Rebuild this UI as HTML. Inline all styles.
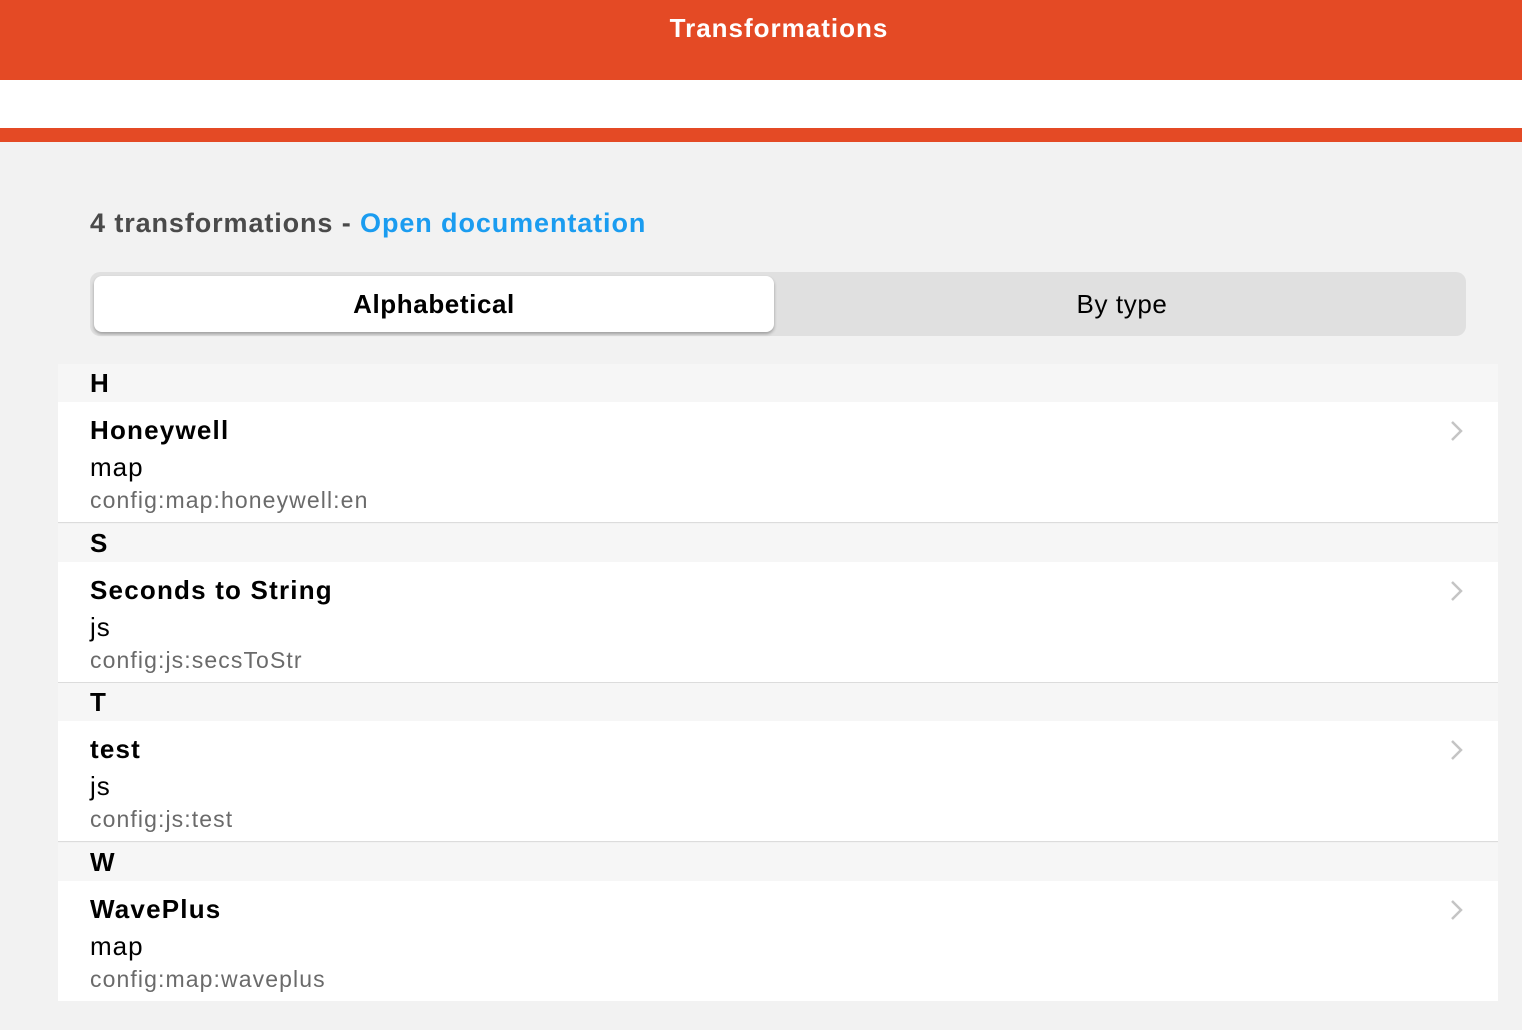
<!DOCTYPE html>
<html><head><meta charset="utf-8"><style>
*{margin:0;padding:0;box-sizing:border-box}
body{width:1522px;height:1030px;background:#f2f2f2;font-family:"Liberation Sans",sans-serif;position:relative;overflow:hidden}
.a{position:absolute;white-space:nowrap}
.hdr{left:0;top:0;width:1522px;height:80px;background:#e44a25}
.wh{left:0;top:80px;width:1522px;height:48px;background:#fff}
.or{left:0;top:128px;width:1522px;height:14px;background:#e44a25}
.title{left:0;width:1522px;top:12px;text-align:center;color:#fff;font-weight:bold;font-size:26px;line-height:32px;padding-left:36px;letter-spacing:1px}
.count{left:90px;top:206px;font-size:27px;line-height:34px;color:#4a4a4a;font-weight:bold;letter-spacing:0.9px}
.count span{color:#1a9cf0}
.seg{left:90px;top:272px;width:1376px;height:64px;background:#e0e0e0;border-radius:10px}
.sel{left:94px;top:276px;width:680px;height:56px;background:#fff;border-radius:8px;box-shadow:0 2px 3px rgba(0,0,0,.3)}
.segt{font-size:26px;line-height:56px;top:276px;text-align:center;color:#000;letter-spacing:0.6px}
.sh{left:58px;width:1440px;height:38px;background:#f6f6f6}
.sh b{position:absolute;left:32px;top:4px;font-size:26px;line-height:30px}
.it{left:58px;width:1440px;height:121px;background:#fff;border-bottom:1px solid #dcdcdc}
.it .n{position:absolute;left:32px;top:12px;font-size:26px;font-weight:bold;line-height:32px;letter-spacing:1.2px}
.it .t{position:absolute;left:32px;top:49px;font-size:26px;line-height:32px;letter-spacing:1px}
.it .c{position:absolute;left:32px;top:84px;font-size:23px;line-height:28px;color:#6a6a6a;letter-spacing:1.1px}
.it svg{position:absolute;left:1392px;top:18px}
</style></head><body>
<div class="a hdr"></div><div class="a wh"></div><div class="a or"></div>
<div class="a title">Transformations</div>
<div class="a count">4 transformations - <span>Open documentation</span></div>
<div class="a seg"></div><div class="a sel"></div>
<div class="a segt" style="left:94px;width:680px;font-weight:bold">Alphabetical</div>
<div class="a segt" style="left:778px;width:688px">By type</div>

<div class="a sh" style="top:364px"><b>H</b></div>
<div class="a it" style="top:402px"><div class="n">Honeywell</div><div class="t">map</div><div class="c">config:map:honeywell:en</div><svg width="14" height="22" viewBox="0 0 14 22"><path d="M2 2l9 9-9 9" fill="none" stroke="#c4c4c4" stroke-width="2.5"/></svg></div>
<div class="a sh" style="top:524px"><b>S</b></div>
<div class="a it" style="top:562px"><div class="n">Seconds to String</div><div class="t">js</div><div class="c">config:js:secsToStr</div><svg width="14" height="22" viewBox="0 0 14 22"><path d="M2 2l9 9-9 9" fill="none" stroke="#c4c4c4" stroke-width="2.5"/></svg></div>
<div class="a sh" style="top:683px"><b>T</b></div>
<div class="a it" style="top:721px"><div class="n">test</div><div class="t">js</div><div class="c">config:js:test</div><svg width="14" height="22" viewBox="0 0 14 22"><path d="M2 2l9 9-9 9" fill="none" stroke="#c4c4c4" stroke-width="2.5"/></svg></div>
<div class="a sh" style="top:843px"><b>W</b></div>
<div class="a it" style="top:881px;border-bottom:none;height:120px"><div class="n">WavePlus</div><div class="t">map</div><div class="c">config:map:waveplus</div><svg width="14" height="22" viewBox="0 0 14 22"><path d="M2 2l9 9-9 9" fill="none" stroke="#c4c4c4" stroke-width="2.5"/></svg></div>
</body></html>
